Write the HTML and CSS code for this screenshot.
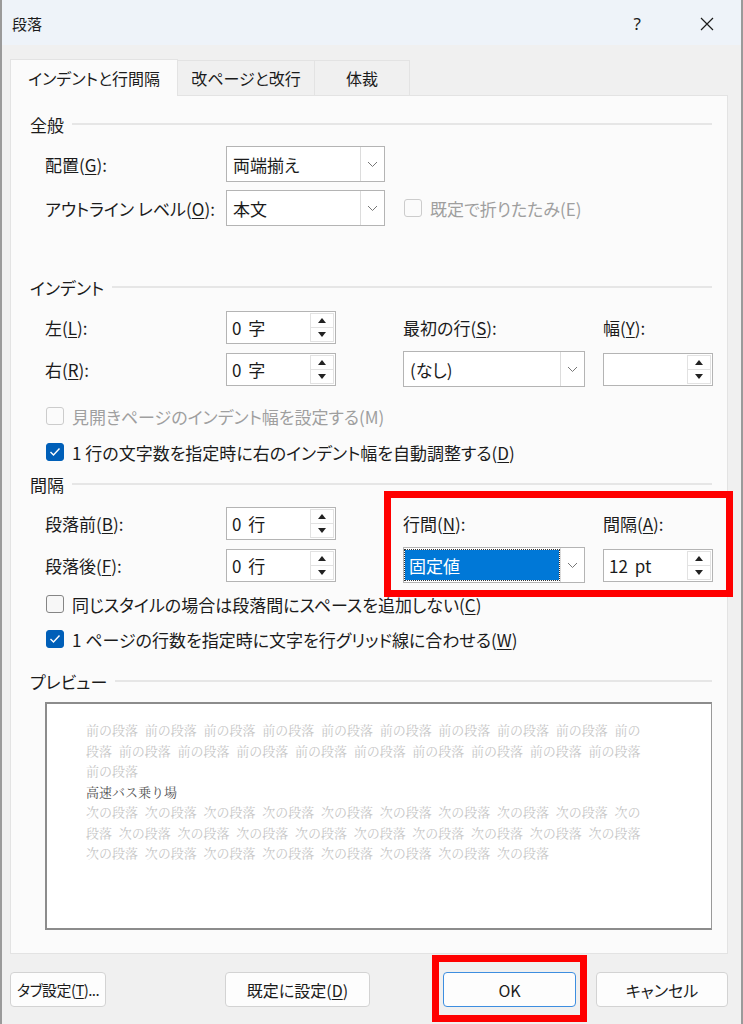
FILE: index.html
```html
<!DOCTYPE html>
<html lang="ja">
<head>
    <meta charset="UTF-8">
    <title>段落</title>
    <link rel="stylesheet" href="styles.css">
</head>
<body>
    <div class="dialog">
        <!-- Title bar -->
        <div class="titlebar">
            <span class="title">段落</span>
            <span class="help">?</span>
            <span class="close">
                <svg width="16" height="16" viewBox="0 0 16 16"><path d="M2 2 L14 14 M14 2 L2 14" stroke="#1b1b1b" stroke-width="1.2" fill="none"/></svg>
            </span>
        </div>

        <div class="content">
            <!-- Tabs -->
            <div class="tabs">
                <div class="tab active">インデントと行間隔</div>
                <div class="tab tab-page">改ページと改行</div>
                <div class="tab tab-style">体裁</div>
            </div>

            <div class="panel">
                <!-- 全般 -->
                <div class="group-head g-general"><span>全般</span></div>
                <div class="row r-align">
                    <div class="label">配置(<u>G</u>):</div>
                    <div class="col-a">
                        <div class="select s-short"><span class="value">両端揃え</span><span class="drop"><svg width="11" height="7" viewBox="0 0 11 7"><path d="M1 1 L5.5 5.5 L10 1" stroke="#777" fill="none"/></svg></span></div>
                    </div>
                </div>
                <div class="row r-outline">
                    <div class="label">アウトライン レベル(<u>O</u>):</div>
                    <div class="col-a">
                        <div class="select s-short"><span class="value">本文</span><span class="drop"><svg width="11" height="7" viewBox="0 0 11 7"><path d="M1 1 L5.5 5.5 L10 1" stroke="#777" fill="none"/></svg></span></div>
                    </div>
                    <div class="col-b">
                        <label class="check disabled"><span class="box"></span>既定で折りたたみ(E)</label>
                    </div>
                </div>

                <!-- インデント -->
                <div class="group-head g-indent"><span>インデント</span></div>
                <div class="row r-spin first">
                    <div class="label">左(<u>L</u>):</div>
                    <div class="col-a">
                        <div class="spin"><span class="value">0 字</span><span class="arrows"><span class="up"></span><span class="down"></span></span></div>
                    </div>
                    <div class="col-b">最初の行(<u>S</u>):</div>
                    <div class="col-c">幅(<u>Y</u>):</div>
                </div>
                <div class="row r-sel">
                    <div class="label">右(<u>R</u>):</div>
                    <div class="col-a">
                        <div class="spin"><span class="value">0 字</span><span class="arrows"><span class="up"></span><span class="down"></span></span></div>
                    </div>
                    <div class="col-b">
                        <div class="select s-wide"><span class="value">(なし)</span><span class="drop"><svg width="11" height="7" viewBox="0 0 11 7"><path d="M1 1 L5.5 5.5 L10 1" stroke="#777" fill="none"/></svg></span></div>
                    </div>
                    <div class="col-c">
                        <div class="spin"><span class="value"></span><span class="arrows"><span class="up"></span><span class="down"></span></span></div>
                    </div>
                </div>
                <div class="row r-check c-mirror">
                    <label class="check disabled"><span class="box"></span>見開きページのインデント幅を設定する(M)</label>
                </div>
                <div class="row r-check c-auto">
                    <label class="check on"><span class="box"><svg width="12" height="10" viewBox="0 0 12 10"><path d="M1.5 5 L4.5 8 L10.5 1.5" stroke="#fff" stroke-width="1.4" fill="none"/></svg></span>1 行の文字数を指定時に右のインデント幅を自動調整する(<u>D</u>)</label>
                </div>

                <!-- 間隔 -->
                <div class="group-head g-spacing"><span>間隔</span></div>
                <div class="row r-spin first-sp">
                    <div class="label">段落前(<u>B</u>):</div>
                    <div class="col-a">
                        <div class="spin"><span class="value">0 行</span><span class="arrows"><span class="up"></span><span class="down"></span></span></div>
                    </div>
                    <div class="col-b">行間(<u>N</u>):</div>
                    <div class="col-c">間隔(<u>A</u>):</div>
                </div>
                <div class="row r-sel">
                    <div class="label">段落後(<u>F</u>):</div>
                    <div class="col-a">
                        <div class="spin"><span class="value">0 行</span><span class="arrows"><span class="up"></span><span class="down"></span></span></div>
                    </div>
                    <div class="col-b">
                        <div class="select s-wide focused"><span class="value"><span class="hl">固定値</span></span><span class="drop"><svg width="11" height="7" viewBox="0 0 11 7"><path d="M1 1 L5.5 5.5 L10 1" stroke="#777" fill="none"/></svg></span></div>
                    </div>
                    <div class="col-c">
                        <div class="spin"><span class="value">12 pt</span><span class="arrows"><span class="up"></span><span class="down"></span></span></div>
                    </div>
                </div>
                <div class="row r-check c-same">
                    <label class="check"><span class="box"></span>同じスタイルの場合は段落間にスペースを追加しない(<u>C</u>)</label>
                </div>
                <div class="row r-check c-grid">
                    <label class="check on"><span class="box"><svg width="12" height="10" viewBox="0 0 12 10"><path d="M1.5 5 L4.5 8 L10.5 1.5" stroke="#fff" stroke-width="1.4" fill="none"/></svg></span>1 ページの行数を指定時に文字を行グリッド線に合わせる(<u>W</u>)</label>
                </div>

                <!-- プレビュー -->
                <div class="group-head g-preview"><span>プレビュー</span></div>
                <div class="preview">
                    <div class="pv">前の段落 前の段落 前の段落 前の段落 前の段落 前の段落 前の段落 前の段落 前の段落 前の</div>
                    <div class="pv">段落 前の段落 前の段落 前の段落 前の段落 前の段落 前の段落 前の段落 前の段落 前の段落</div>
                    <div class="pv">前の段落</div>
                    <div class="pv current">高速バス乗り場</div>
                    <div class="pv">次の段落 次の段落 次の段落 次の段落 次の段落 次の段落 次の段落 次の段落 次の段落 次の</div>
                    <div class="pv">段落 次の段落 次の段落 次の段落 次の段落 次の段落 次の段落 次の段落 次の段落 次の段落</div>
                    <div class="pv">次の段落 次の段落 次の段落 次の段落 次の段落 次の段落 次の段落 次の段落</div>
                </div>
            </div>

            <!-- Buttons -->
            <div class="buttons">
                <button class="btn b-tab">タブ設定(<u>T</u>)...</button>
                <button class="btn b-default">既定に設定(<u>D</u>)</button>
                <button class="btn b-ok">OK</button>
                <button class="btn b-cancel">キャンセル</button>
            </div>
        </div>

        <!-- Red annotation boxes -->
        <div class="mark mark-spacing"></div>
        <div class="mark mark-ok"></div>
    </div>
</body>
</html>
```

FILE: styles.css
```css
body {
    margin: 0;
    padding: 0;
    background-color: #f0f0f0;
    font-family: "Noto Sans CJK JP", "Noto Sans", sans-serif;
    color: #1b1b1b;
}

.dialog {
    position: relative;
    width: 743px;
    height: 1024px;
    box-sizing: border-box;
    border-left: 2px solid #9a9a9a;
    border-right: 2px solid #9a9a9a;
    background-color: #f0f0f0;
    overflow: hidden;
}

u {
    text-decoration-thickness: 1px;
    text-underline-offset: 2px;
}

/* Title bar */
.titlebar {
    height: 45px;
    background-color: #eef3f9;
    display: flex;
    align-items: center;
    font-size: 15px;
}

.title {
    margin-left: 10px;
    margin-top: 2px;
}

.help {
    margin-left: auto;
    margin-top: 2px;
    font-family: "Noto Sans", sans-serif;
    font-size: 17px;
}

.close {
    display: flex;
    margin-left: 58px;
    margin-right: 26px;
    margin-top: 2px;
}

/* Tabs */
.content {
    padding: 14px 0 0 8px;
}

.tabs {
    display: flex;
    height: 36px;
    font-size: 16px;
    font-feature-settings: "palt";
}

.tab {
    display: flex;
    align-items: center;
    justify-content: center;
    box-sizing: border-box;
    border: 1px solid #e3e3e3;
    border-bottom: none;
    background-color: #f0f0f0;
    margin-top: 1px;
}

.tab.active {
    width: 168px;
    background-color: #fbfbfb;
    margin-top: 0;
    position: relative;
    z-index: 1;
    height: 37px;
}

.tab-page {
    width: 137px;
    border-left: none;
}

.tab-style {
    width: 95px;
    border-left: none;
}

/* Main panel */
.panel {
    width: 718px;
    height: 859px;
    box-sizing: border-box;
    background-color: #fbfbfb;
    border: 1px solid #e3e3e3;
    padding: 0 15px 0 19px;
    font-size: 17px;
    font-feature-settings: "palt";
}

.group-head {
    display: flex;
    align-items: center;
    height: 22px;
}

.group-head::after {
    content: "";
    flex: 1;
    height: 2px;
    margin-left: 8px;
    background-color: #e6e6e6;
}

.g-general { margin-top: 17px; }
.g-indent { margin-top: 50px; }
.g-spacing { margin-top: 7px; }
.g-preview { margin-top: 17px; }

.row {
    display: flex;
    align-items: center;
    padding-left: 15px;
}

.r-align { margin-top: 11px; height: 36px; }
.r-outline { margin-top: 8px; height: 36px; }
.r-spin { height: 33px; }
.r-spin.first { margin-top: 13px; }
.r-spin.first-sp { margin-top: 12px; }
.r-sel { margin-top: 7px; height: 36px; }
.r-check { height: 28px; }
.c-mirror { margin-top: 15px; }
.c-auto { margin-top: 8px; }
.c-same { margin-top: 7px; }
.c-grid { margin-top: 7px; }

.label {
    width: 181px;
    flex-shrink: 0;
}

.col-a {
    width: 177px;
    flex-shrink: 0;
}

.col-b {
    width: 200px;
    flex-shrink: 0;
}

.col-c {
    width: 110px;
    flex-shrink: 0;
}

/* Dropdown */
.select {
    display: flex;
    height: 36px;
    box-sizing: border-box;
    border: 1px solid #b4b4b4;
    background-color: #fff;
}

.s-short { width: 159px; }
.s-wide { width: 182px; }

.select .value {
    flex: 1;
    display: flex;
    align-items: center;
    padding-left: 6px;
}

.select .drop {
    width: 23px;
    border-left: 1px solid #dcdcdc;
    display: flex;
    align-items: center;
    justify-content: center;
}

.select.focused .value {
    padding: 2px 1px 2px 1px;
}

.hl {
    display: flex;
    align-items: center;
    width: 100%;
    height: 100%;
    box-sizing: border-box;
    padding-left: 4px;
    background-color: #0078d7;
    color: #fff;
    outline: 1px dotted #333;
}

/* Spinner */
.spin {
    display: flex;
    width: 110px;
    height: 33px;
    box-sizing: border-box;
    border: 1px solid #b4b4b4;
    background-color: #fff;
}

.spin .value {
    flex: 1;
    display: flex;
    align-items: center;
    padding-left: 5px;
    font-feature-settings: normal;
    word-spacing: 3px;
}

.arrows {
    width: 22px;
    display: flex;
    flex-direction: column;
    margin: 1px 1px 1px 0;
    border: 1px solid #e2e2e2;
}

.arrows span {
    flex: 1;
    display: flex;
    align-items: center;
    justify-content: center;
}

.arrows .up {
    border-bottom: 1px solid #e2e2e2;
}

.arrows .up::before {
    content: "";
    border-left: 4px solid transparent;
    border-right: 4px solid transparent;
    border-bottom: 5px solid #222;
}

.arrows .down::before {
    content: "";
    border-left: 4px solid transparent;
    border-right: 4px solid transparent;
    border-top: 5px solid #222;
}

/* Checkbox */
.check {
    display: flex;
    align-items: center;
}

.check .box {
    width: 18px;
    height: 18px;
    box-sizing: border-box;
    margin-left: 1px;
    margin-right: 8px;
    border: 1px solid #858585;
    border-radius: 3px;
    background-color: #f7f7f7;
    display: flex;
    align-items: center;
    justify-content: center;
}

.check.on .box {
    border-color: #005fb8;
    background-color: #005fb8;
}

.check.disabled {
    color: #9f9f9f;
}

.check.disabled .box {
    border-color: #cccccc;
    background-color: #fbfbfb;
}

/* Preview */
.preview {
    margin: 10px 0 0 15px;
    height: 228px;
    box-sizing: border-box;
    border: 2px solid #8c8c8c;
    border-right: 1px solid #9a9a9a;
    background-color: #fff;
    padding: 16px 0 0 39px;
    font-family: "Noto Serif CJK JP", "Noto Sans CJK JP", serif;
    font-size: 13px;
    line-height: 20.5px;
    word-spacing: 3.4px;
    font-feature-settings: normal;
    color: #c6c6c6;
}

.pv {
    white-space: pre;
}

.pv.current {
    color: #555;
}

/* Bottom buttons */
.buttons {
    display: flex;
    margin-top: 18px;
}

.btn {
    height: 35px;
    box-sizing: border-box;
    border: 1px solid #d3d3d3;
    border-radius: 4px;
    background-color: #fdfdfd;
    font-family: "Noto Sans CJK JP", "Noto Sans", sans-serif;
    font-size: 16px;
    font-feature-settings: "palt";
    white-space: nowrap;
    color: #1b1b1b;
    padding: 0;
}

.b-tab {
    width: 96px;
    font-size: 15px;
    letter-spacing: -0.6px;
}
.b-default { width: 145px; margin-left: 119px; }
.b-ok {
    width: 133px;
    margin-left: 73px;
    border-color: #3d8ee0;
}
.b-cancel { width: 132px; margin-left: 20px; }

/* Red highlight frames */
.mark {
    position: absolute;
    box-sizing: border-box;
    border: 7px solid #ff0000;
}

.mark-spacing {
    left: 382px;
    top: 491px;
    width: 349px;
    height: 106px;
}

.mark-ok {
    left: 430px;
    top: 955px;
    width: 155px;
    height: 67px;
}
```
